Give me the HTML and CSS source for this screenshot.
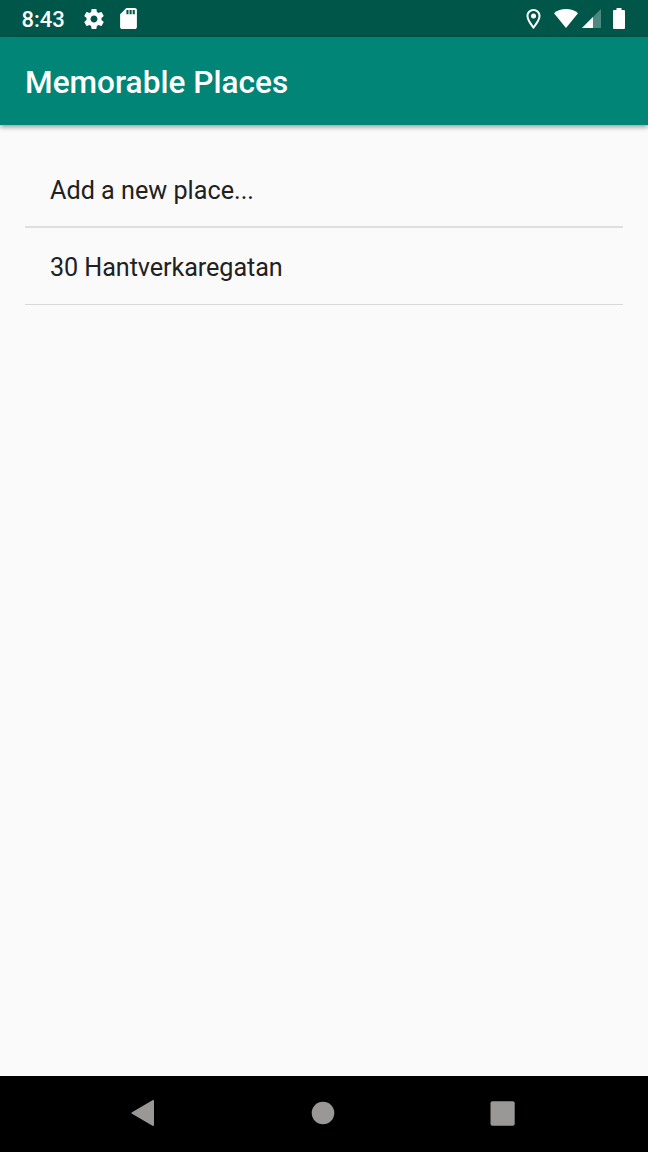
FILE: index.html
```html
<!DOCTYPE html>
<html lang="en">
<head>
<meta charset="utf-8">
<title>Memorable Places</title>
<link rel="stylesheet" href="styles.css">
</head>
<body>
<div class="status-bar">
  <span class="clock">8:43</span>
  <svg class="gear" viewBox="2 2 20 20"><path d="M19.43 12.98c.04-.32.07-.64.07-.98s-.03-.66-.07-.98l2.11-1.65c.19-.15.24-.42.12-.64l-2-3.46c-.12-.22-.39-.3-.61-.22l-2.49 1c-.52-.4-1.08-.73-1.69-.98l-.38-2.65C14.46 2.18 14.25 2 14 2h-4c-.25 0-.46.18-.49.42l-.38 2.65c-.61.25-1.17.59-1.69.98l-2.49-1c-.23-.09-.49 0-.61.22l-2 3.46c-.13.22-.07.49.12.64l2.11 1.65c-.04.32-.07.65-.07.98s.03.66.07.98l-2.11 1.65c-.19.15-.24.42-.12.64l2 3.46c.12.22.39.3.61.22l2.49-1c.52.4 1.08.73 1.69.98l.38 2.65c.03.24.24.42.49.42h4c.25 0 .46-.18.49-.42l.38-2.65c.61-.25 1.17-.59 1.69-.98l2.49 1c.23.09.49 0 .61-.22l2-3.46c.12-.22.07-.49-.12-.64l-2.11-1.65zM12 15.5c-1.93 0-3.5-1.57-3.5-3.5s1.57-3.5 3.5-3.5 3.5 1.57 3.5 3.5-1.57 3.5-3.5 3.5z"/></svg>
  <svg class="card" viewBox="4 2 16 20"><path d="M18 2h-8L4.02 8 4 20c0 1.100.9 2 2 2h12c1.100 0 2-.9 2-2V4c0-1.100-.9-2-2-2zm-6 6h-2V4h2v4zm3 0h-2V4h2v4zm3 0h-2V4h2v4z"/></svg>
  <span class="spacer"></span>
  <svg class="pin" viewBox="5 2 14 20"><path d="M12 2C8.130 2 5 5.130 5 9c0 5.250 7 13 7 13s7-7.750 7-13c0-3.870-3.130-7-7-7zM7 9c0-2.760 2.240-5 5-5s5 2.240 5 5c0 2.880-2.880 7.190-5 9.880C9.920 16.210 7 11.850 7 9z"/><circle cx="12" cy="9" r="2.500"/></svg>
  <svg class="wifi" viewBox="0 0 24 19"><path d="M12 19L0 4.200C3.400 1.400 7.300 0 12 0s8.600 1.400 12 4.200Z"/></svg>
  <svg class="signal" viewBox="0 0 20 20"><path class="faint" d="M20 0v20H0Z"/><path d="M11.500 8.500V20H0Z"/></svg>
  <svg class="battery" viewBox="0 0 12 21"><path d="M3.500 0h5v2H11q1 0 1 1v17q0 1-1 1H1q-1 0-1-1V3q0-1 1-1h2.500Z"/></svg>
</div>
<header class="app-bar"><h1 class="title">Memorable Places</h1></header>
<main class="content">
  <ul class="places">
    <li class="place">Add a new place...</li>
    <li class="place">30 Hantverkaregatan</li>
  </ul>
</main>
<nav class="nav-bar">
  <svg class="back" viewBox="0 0 24 26"><path d="M22 1v24L1.500 13Z"/></svg>
  <svg class="home" viewBox="0 0 24 24"><circle cx="12" cy="12" r="11.300"/></svg>
  <svg class="recent" viewBox="0 0 25 25"><rect x=".5" y=".3" width="24.200" height="24.400" rx="2"/></svg>
</nav>
</body>
</html>
```
FILE: styles.css
```css
* {
  box-sizing: border-box;
}

body {
  margin: 0;
  height: 1152px;
  display: flex;
  flex-direction: column;
  background: #fafafa;
  font-family: Roboto, "Liberation Sans", sans-serif;
}

.status-bar {
  flex: none;
  height: 37px;
  padding: 0 23px 0 21.5px;
  display: flex;
  align-items: center;
  background: #005749;
  color: #fff;
}

.status-bar svg {
  flex: none;
  fill: #fff;
}

.clock {
  width: 62px;
  font-size: 22px;
  font-weight: 500;
  line-height: 37px;
  padding-top: 1px;
}

.gear { width: 20px; height: 20px; }
.card { width: 17px; height: 21px; margin-left: 16.5px; }
.spacer { flex: 1; }
.pin { width: 15px; height: 20px; margin-right: 13px; }
.wifi { width: 24px; height: 19px; margin-right: 4px; }
.signal { width: 19px; height: 19px; margin-right: 12px; }
.battery { width: 12px; height: 21px; }

.signal .faint {
  fill: #4d8980;
}

.app-bar {
  flex: none;
  height: 88px;
  padding: 4px 25px 0;
  display: flex;
  align-items: center;
  background: #008577;
  color: #fff;
  box-shadow: 0 2px 5px rgba(0, 0, 0, .4);
}

.title {
  margin: 0;
  font-size: 31.6px;
  font-weight: 500;
  line-height: 40px;
}

.content {
  flex: 1;
  padding: 26px 25.5px 0 25px;
}

.places {
  margin: 0;
  padding: 0;
  list-style: none;
}

.place {
  height: 77px;
  padding: 1px 25px 0;
  border-bottom: 2px solid #dfdfdf;
  font-size: 25.2px;
  line-height: 77px;
  color: #212121;
}

.place:last-child {
  border-bottom-width: 1px;
  border-bottom-color: #d9d9d9;
  letter-spacing: -.08px;
}

.nav-bar {
  flex: none;
  height: 76px;
  padding: 0 133px 2px 131px;
  display: flex;
  align-items: center;
  justify-content: space-between;
  background: #000;
}

.nav-bar svg {
  fill: #999896;
}

.back {
  width: 24px;
  height: 26px;
  stroke: #999896;
  stroke-width: 2;
  stroke-linejoin: round;
}

.home { width: 24px; height: 24px; }
.recent { width: 25px; height: 25px; }
```
